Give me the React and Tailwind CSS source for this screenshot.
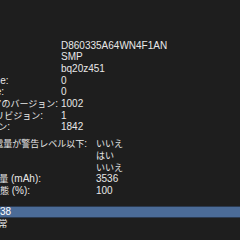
import React from "react";

function J({ children }) {
  return <span className="text-[9px]">{children}</span>;
}

function Row({ label, value, boxCls, padCls }) {
  return (
    <div className="flex h-[11.7px] leading-[11.7px] whitespace-nowrap">
      <div className={`${boxCls} shrink-0 flex justify-end`}>
        <span className={padCls}>{label}</span>
      </div>
      <span>{value}</span>
    </div>
  );
}

export default function App() {
  return (
    <div
      className="w-[240px] h-[240px] overflow-hidden bg-[#1e1e1e] text-[#e8e8e8] text-[10px] pt-[39.5px]"
      style={{ fontFamily: '"Liberation Sans", "Noto Sans CJK JP", sans-serif' }}
    >
      <div className="flex flex-col">
        <Row boxCls="w-[61px]" padCls="mr-[80px]" label={<><J>シリアル番号</J>:</>} value="D860335A64WN4F1AN" />
        <Row boxCls="w-[61px]" padCls="mr-[80px]" label={<><J>製造元</J>:</>} value="SMP" />
        <Row boxCls="w-[61px]" padCls="mr-[80px]" label={<><J>デバイス名</J>:</>} value="bq20z451" />
        <Row boxCls="w-[61px]" padCls="mr-[52.5px]" label="Pack Lot Code:" value="0" />
        <Row boxCls="w-[61px]" padCls="mr-[57px]" label="PCB Lot Code:" value="0" />
        <Row boxCls="w-[61px]" padCls="mr-[3px]" label={<><J>ファームウェアのバージョン</J>:</>} value="1002" />
        <Row boxCls="w-[61px]" padCls="mr-[18px]" label={<><J>ハードウェアリビジョン</J>:</>} value="1" />
        <Row boxCls="w-[61px]" padCls="mr-[51px]" label={<><J>セルリビジョン</J>:</>} value="1842" />
      </div>
      <div className="flex flex-col mt-[5.2px]">
        <Row boxCls="w-[96px]" padCls="mr-[9px]" label={<><J>残り充電量が警告レベル以下</J>:</>} value={<J>いいえ</J>} />
        <Row boxCls="w-[96px]" padCls="mr-[110px]" label={<><J>フル充電済み</J>:</>} value={<J>はい</J>} />
        <Row boxCls="w-[96px]" padCls="mr-[110px]" label={<><J>充電中</J>:</>} value={<J>いいえ</J>} />
        <Row boxCls="w-[96px]" padCls="mr-[55px]" label={<><J>フル充電容量</J> (mAh):</>} value="3536" />
        <Row boxCls="w-[96px]" padCls="mr-[66px]" label={<><J>充電状態</J> (%):</>} value="100" />
      </div>
      <div className="mt-[8.9px] border-y border-[#2b3a50] bg-[#4b6b97] h-[12.6px] leading-[10.6px] text-white whitespace-nowrap">
        <span>38</span>
      </div>
      <div className="h-[11.7px] leading-[11.7px] whitespace-nowrap -ml-[10.5px]">
        <J>正常</J>
      </div>
    </div>
  );
}
